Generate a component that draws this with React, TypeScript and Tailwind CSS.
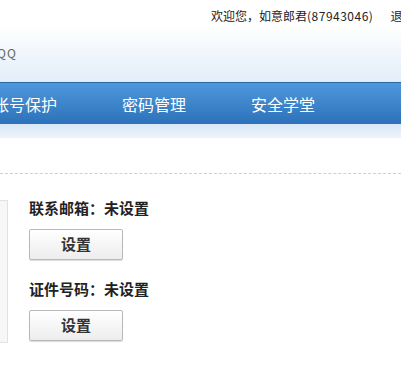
import React from 'react';

const navItems = ['帐号保护', '密码管理', '安全学堂'];

const fields = [
  { label: '联系邮箱：未设置' },
  { label: '证件号码：未设置' },
];

const App = () => {
  return (
    <div
      className="w-[401px] h-[380px] overflow-hidden bg-white text-[#333]"
      style={{ fontFamily: '"Noto Sans CJK SC", "Noto Sans", sans-serif' }}
    >
      {/* header */}
      <div className="h-[82px] bg-gradient-to-b from-white from-30% to-[#e3edf8]">
        <div className="h-[32px] pl-[211px] pt-[8px] text-[12px] leading-[16px] whitespace-nowrap text-[#222]">
          欢迎您，如意郎君<span className="tracking-[0.5px]">(87943046)</span>
          <span className="ml-[17px]">退出</span>
        </div>
        <div className="ml-[-3px] mt-[14px] text-[12px] leading-[14px] text-[#666] tracking-[1px]">
          QQ
        </div>
      </div>

      {/* nav */}
      <div className="h-[42px] border-t border-[#2d679f] bg-gradient-to-b from-[#4f98dd] to-[#2c72ba] flex items-center overflow-hidden">
        <div className="flex gap-[65px] ml-[-7px] whitespace-nowrap">
          {navItems.map((item) => (
            <span key={item} className="text-white text-[16px] leading-[20px] w-[64px]">
              {item}
            </span>
          ))}
        </div>
      </div>
      <div className="h-[14px] bg-gradient-to-b from-[#d9e7f6] to-[#eef4fb]" />

      {/* dashed separator */}
      <div className="mt-[35px] border-t border-dashed border-[#cfcfcf]" />

      {/* content */}
      <div className="flex mt-[26px]">
        <div className="w-[9px] h-[143px] ml-[-1px] border border-[#e2e2e2] bg-[#f7f7f7]" />
        <div className="ml-[21px] flex flex-col">
          {fields.map((f, i) => (
            <div key={i} className={i > 0 ? 'mt-[21px]' : ''}>
              <div className="text-[15px] leading-[16px] font-bold text-[#222]">{f.label}</div>
              <button className="mt-[13px] w-[94px] h-[31px] rounded-[2px] border border-[#b9b9b9] bg-gradient-to-b from-white to-[#ededed] shadow-[0_1px_1px_rgba(0,0,0,0.15)] text-[15px] font-bold text-[#333] flex items-center justify-center">
                设置
              </button>
            </div>
          ))}
        </div>
      </div>
    </div>
  );
};

export default App;
